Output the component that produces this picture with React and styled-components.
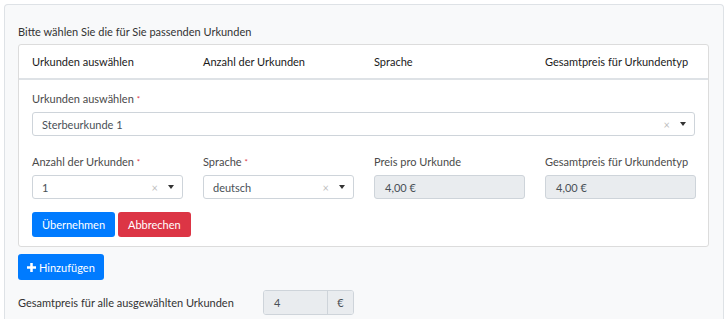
import React from 'react';
import styled, { createGlobalStyle } from 'styled-components';

const GlobalStyle = createGlobalStyle`
  body {
    margin: 0;
    background: #ffffff;
    font-family: Lato, "Open Sans", sans-serif;
    font-size: 11px;
    color: #212529;
  }
`;

const columns = ['Urkunden auswählen', 'Anzahl der Urkunden', 'Sprache', 'Gesamtpreis für Urkundentyp'];

const App = () => {
  return (
    <>
      <GlobalStyle />
      <Panel>
        <Title>Bitte wählen Sie die für Sie passenden Urkunden</Title>
        <Card>
          <Header>
            {columns.map((col) => (
              <HeaderCell key={col}>{col}</HeaderCell>
            ))}
          </Header>
          <Body>
            <Field>
              <Label>
                Urkunden auswählen <Star>*</Star>
              </Label>
              <Select value="Sterbeurkunde 1" />
            </Field>
            <Row>
              <Field>
                <Label>
                  Anzahl der Urkunden <Star>*</Star>
                </Label>
                <Select value="1" />
              </Field>
              <Field>
                <Label>
                  Sprache <Star>*</Star>
                </Label>
                <Select value="deutsch" />
              </Field>
              <Field>
                <Label>Preis pro Urkunde</Label>
                <ReadOnly>4,00 €</ReadOnly>
              </Field>
              <Field>
                <Label>Gesamtpreis für Urkundentyp</Label>
                <ReadOnly>4,00 €</ReadOnly>
              </Field>
            </Row>
            <Actions>
              <Button $color="#007bff">Übernehmen</Button>
              <Button $color="#dc3545">Abbrechen</Button>
            </Actions>
          </Body>
        </Card>
        <AddButton $color="#007bff">
          <PlusIcon />
          Hinzufügen
        </AddButton>
        <TotalRow>
          <TotalLabel>Gesamtpreis für alle ausgewählten Urkunden</TotalLabel>
          <InputGroup>
            <GroupInput>4</GroupInput>
            <Addon>€</Addon>
          </InputGroup>
        </TotalRow>
      </Panel>
    </>
  );
};

const Select = ({ value }) => (
  <SelectBox>
    <SelectValue>{value}</SelectValue>
    <Clear>×</Clear>
    <Caret />
  </SelectBox>
);

const PlusIcon = () => (
  <svg width="9" height="9" viewBox="0 0 10 10">
    <path d="M3.6 0h2.8v3.6H10v2.8H6.4V10H3.6V6.4H0V3.6h3.6z" fill="#fff" />
  </svg>
);

export default App;

const Panel = styled.div`
  margin: 4px 4px 0 4px;
  padding: 0 14px 0 13px;
  background: #f8f9fa;
  border: 1px solid #dee2e6;
  border-bottom: none;
  border-radius: 4px 4px 0 0;
  height: 315px;
  box-sizing: border-box;
  white-space: nowrap;
`;

const Title = styled.div`
  height: 39px;
  line-height: 14px;
  padding-top: 20px;
  box-sizing: border-box;
  color: #333;
`;

const Card = styled.div`
  background: #fff;
  border: 1px solid #dcdcdc;
  border-radius: 3px;
`;

const Grid = styled.div`
  display: grid;
  grid-template-columns: repeat(4, 151px);
  column-gap: 20px;
`;

const Header = styled(Grid)`
  height: 33px;
  align-items: center;
  padding: 0 13px;
  border-bottom: 2px solid #dee2e6;
`;

const HeaderCell = styled.div`
  color: #1a1a1a;
`;

const Body = styled.div`
  padding: 12px 13px 9px 13px;
`;

const Field = styled.div`
  display: flex;
  flex-direction: column;
`;

const Label = styled.div`
  line-height: 14px;
  margin-bottom: 6px;
  color: #4a4a4a;
`;

const Star = styled.span`
  color: #dc3545;
  font-size: 8px;
  vertical-align: top;
`;

const Row = styled(Grid)`
  margin-top: 19px;
`;

const SelectBox = styled.div`
  display: flex;
  align-items: center;
  height: 24px;
  box-sizing: border-box;
  border: 1px solid #ced4da;
  border-radius: 3px;
  padding: 0 8px 0 9px;
  background: #fff;
  color: #495057;
`;

const SelectValue = styled.span`
  flex: 1;
`;

const Clear = styled.span`
  color: #c0c0c0;
  font-size: 11px;
  margin-right: 10px;
`;

const Caret = styled.span`
  width: 0;
  height: 0;
  border-left: 3.5px solid transparent;
  border-right: 3.5px solid transparent;
  border-top: 4px solid #333;
`;

const ReadOnly = styled.div`
  display: flex;
  align-items: center;
  height: 24px;
  box-sizing: border-box;
  border: 1px solid #ced4da;
  border-radius: 3px;
  padding: 0 10px;
  background: #e9ecef;
  color: #495057;
`;

const Actions = styled.div`
  display: flex;
  gap: 3px;
  margin-top: 13px;
`;

const Button = styled.button`
  display: inline-flex;
  align-items: center;
  gap: 3px;
  height: 25px;
  padding: 0 10px;
  border: none;
  border-radius: 3px;
  background: ${(props) => props.$color};
  color: #fff;
  font-family: inherit;
  font-size: 11px;
`;

const AddButton = styled(Button)`
  margin-top: 7px;
  height: 26px;
  padding: 0 9px;
`;

const TotalRow = styled.div`
  display: flex;
  align-items: center;
  margin-top: 10px;
`;

const TotalLabel = styled.div`
  width: 245px;
  color: #333;
`;

const InputGroup = styled.div`
  display: flex;
  height: 25px;
  box-sizing: border-box;
  border: 1px solid #ced4da;
  border-radius: 3px;
  overflow: hidden;
`;

const GroupInput = styled.div`
  width: 53px;
  padding-left: 10px;
  display: flex;
  align-items: center;
  background: #e9ecef;
  color: #495057;
`;

const Addon = styled.div`
  width: 25px;
  display: flex;
  align-items: center;
  justify-content: center;
  border-left: 1px solid #ced4da;
  background: #e9ecef;
  color: #495057;
`;
